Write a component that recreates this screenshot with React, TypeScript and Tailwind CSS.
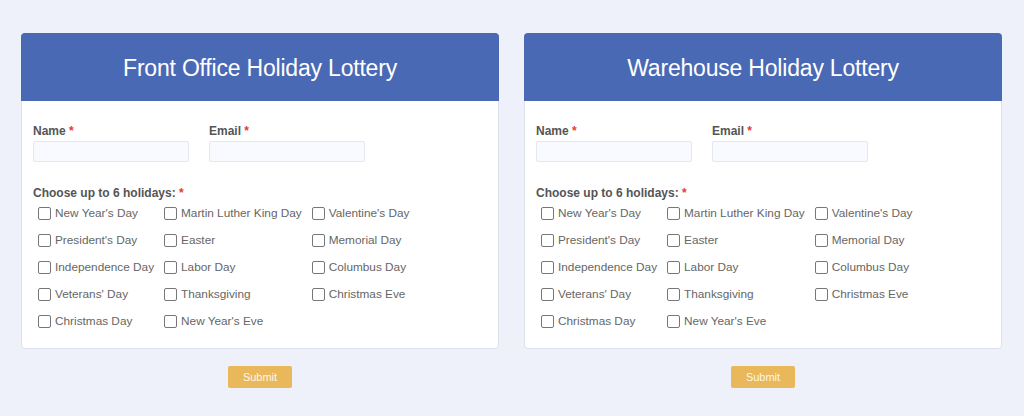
const holidays = [
  ["New Year's Day", 'Martin Luther King Day', "Valentine's Day"],
  ["President's Day", 'Easter', 'Memorial Day'],
  ['Independence Day', 'Labor Day', 'Columbus Day'],
  ["Veterans' Day", 'Thanksgiving', 'Christmas Eve'],
  ['Christmas Day', "New Year's Eve", null],
];

function Checkbox({ label }: { label: string }) {
  return (
    <label className="flex items-center gap-[4px] whitespace-nowrap">
      <span className="w-[13px] h-[13px] rounded-[2px] border border-[#777] bg-white shrink-0" />
      <span>{label}</span>
    </label>
  );
}

function LotteryCard({ title }: { title: string }) {
  return (
    <div className="flex flex-col items-center w-[478px]">
      <div className="w-full bg-white border border-[#dbe1ec] rounded-[4px] h-[316px]">
        <div className="bg-[#4a69b5] rounded-t-[4px] h-[68px] flex items-center justify-center -mx-px -mt-px">
          <h1 className="text-white text-[23px] tracking-[-0.2px] pt-[2px]">{title}</h1>
        </div>
        <div className="px-[11px] pt-[22px]">
          <div className="flex gap-[20px]">
            <div className="flex flex-col">
              <span className="text-[12px] font-bold text-[#555] leading-[16px]">
                Name <span className="text-[#e53935]">*</span>
              </span>
              <input className="mt-[2px] w-[156px] h-[21px] border border-[#e2e7f0] bg-[#f8faff] rounded-[2px]" />
            </div>
            <div className="flex flex-col">
              <span className="text-[12px] font-bold text-[#555] leading-[16px]">
                Email <span className="text-[#e53935]">*</span>
              </span>
              <input className="mt-[2px] w-[156px] h-[21px] border border-[#e2e7f0] bg-[#f8faff] rounded-[2px]" />
            </div>
          </div>
          <div className="mt-[23px] text-[12px] font-bold text-[#555] leading-[16px]">
            Choose up to 6 holidays: <span className="text-[#e53935]">*</span>
          </div>
          <div className="ml-[5px] mt-[4px] grid grid-cols-[auto_auto_auto] justify-start gap-x-[10px] gap-y-[11px] text-[11.8px] text-[#666] leading-[16px]">
            {holidays.flat().map((h, i) =>
              h ? <Checkbox key={i} label={h} /> : <span key={i} />
            )}
          </div>
        </div>
      </div>
      <button className="mt-[17px] w-[64px] h-[22px] bg-[#e8b85a] rounded-[2px] text-[11px] text-[#fff7e6]">
        Submit
      </button>
    </div>
  );
}

export default function App() {
  return (
    <div
      className="w-[1024px] h-[416px] bg-[#eef1f9] flex gap-[25px] pl-[21px] pt-[33px]"
      style={{ fontFamily: '"Liberation Sans", Arial, sans-serif' }}
    >
      <LotteryCard title="Front Office Holiday Lottery" />
      <LotteryCard title="Warehouse Holiday Lottery" />
    </div>
  );
}
